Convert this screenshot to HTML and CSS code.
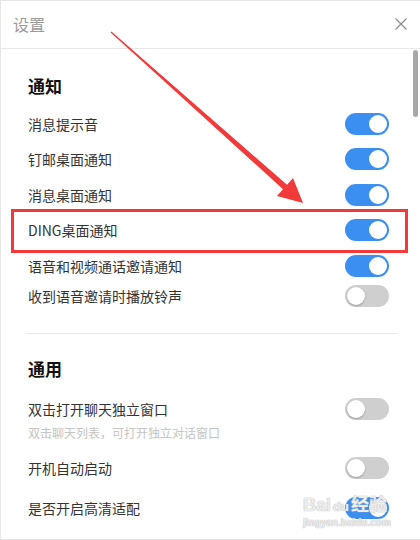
FILE: index.html
```html
<!DOCTYPE html>
<html lang="zh-CN">
  <head>
    <meta charset="UTF-8" />
    <meta name="viewport" content="width=device-width, initial-scale=1.0" />
    <title>设置</title>
    <link rel="stylesheet" href="styles.css">
  </head>
  <body>
    <div class="st-window">
      <div class="st-titlebar">
        <span class="st-title">设置</span>
        <svg class="st-close" width="12" height="12" viewBox="0 0 12 12">
          <path d="M0.5 0.5 L11.5 11.5 M11.5 0.5 L0.5 11.5" stroke="#8c8c8c" stroke-width="1.2" fill="none" />
        </svg>
      </div>

      <div class="st-body">
        <!-- 通知 -->
        <div class="st-section">
          <h2 class="st-heading">通知</h2>
          <div class="st-row">
            <span class="st-label">消息提示音</span>
            <span class="st-switch is-on"></span>
          </div>
          <div class="st-row">
            <span class="st-label">钉邮桌面通知</span>
            <span class="st-switch is-on"></span>
          </div>
          <div class="st-row">
            <span class="st-label">消息桌面通知</span>
            <span class="st-switch is-on"></span>
          </div>
          <div class="st-row">
            <span class="st-label">DING桌面通知</span>
            <span class="st-switch is-on"></span>
          </div>
          <div class="st-row">
            <span class="st-label">语音和视频通话邀请通知</span>
            <span class="st-switch is-on"></span>
          </div>
          <div class="st-row st-row-tight">
            <span class="st-label">收到语音邀请时播放铃声</span>
            <span class="st-switch"></span>
          </div>
        </div>

        <div class="st-divider"></div>

        <!-- 通用 -->
        <div class="st-section st-section-general">
          <h2 class="st-heading">通用</h2>
          <div class="st-row st-row-sub">
            <span class="st-label">双击打开聊天独立窗口</span>
            <span class="st-switch"></span>
          </div>
          <p class="st-hint">双击聊天列表，可打开独立对话窗口</p>
          <div class="st-row st-row-wide">
            <span class="st-label">开机自动启动</span>
            <span class="st-switch"></span>
          </div>
          <div class="st-row st-row-wide">
            <span class="st-label">是否开启高清适配</span>
            <span class="st-switch is-on"></span>
          </div>
        </div>
      </div>

      <!-- 滚动条 -->
      <div class="st-scroll-thumb"></div>

      <!-- 标注：红框和箭头 -->
      <div class="mark-box"></div>
      <svg class="mark-arrow" width="420" height="540" viewBox="0 0 420 540">
        <polygon points="111.4,31.5 287,184.8 293,178 303,203 277,196 283,189.2 110.6,32.5" fill="#f23a3a" />
      </svg>

      <!-- 水印 -->
      <div class="wm">
        <div class="wm-logo">Bai<span class="wm-paw">du</span>经验</div>
        <div class="wm-url">jingyan.baidu.com</div>
      </div>
    </div>
  </body>
</html>
```

FILE: styles.css
```css
* {
  box-sizing: border-box;
}
body {
  margin: 0;
  background: #fff;
  font-family: "Noto Sans CJK SC", "Noto Sans", sans-serif;
  color: #333;
}

.st-window {
  position: relative;
  width: 420px;
  height: 540px;
  border: 1px solid #e6e6e6;
  border-right: 0;
  background: #fff;
  overflow: hidden;
}

/* 标题栏 */
.st-titlebar {
  display: flex;
  align-items: center;
  justify-content: space-between;
  height: 48px;
  padding: 0 13px 1px 12px;
  border-bottom: 1px solid #e8e8e8;
}
.st-title {
  font-size: 16px;
  line-height: 20px;
  color: #999;
}
.st-close {
  display: block;
}

.st-body {
  padding: 0 31px 0 27px;
}

.st-heading {
  margin: 0;
  height: 24px;
  font-size: 17px;
  line-height: 24px;
  font-weight: bold;
  color: #111;
}
.st-section {
  padding-top: 25px;
}
.st-section .st-heading {
  margin-bottom: 8px;
}
.st-section-general {
  padding-top: 23px;
}
.st-section-general .st-heading {
  margin-bottom: 11px;
}

.st-row {
  display: flex;
  align-items: center;
  justify-content: space-between;
  height: 35.5px;
}
.st-row-tight {
  height: 25px;
}
.st-row-sub {
  height: 35px;
}
.st-row-wide {
  height: 39.5px;
}
.st-label {
  font-size: 14px;
  line-height: 20px;
  color: #333;
}

.st-hint {
  margin: -2px 0 8px;
  font-size: 12px;
  line-height: 16px;
  color: #c4c4c4;
}

.st-divider {
  height: 1px;
  margin: 24px -8px 0 -2px;
  background: #e8e8e8;
}

/* 开关 */
.st-switch {
  position: relative;
  flex: none;
  width: 44px;
  height: 22px;
  border-radius: 11px;
  background: #cfcfcf;
}
.st-switch::before {
  content: "";
  position: absolute;
  top: 2px;
  left: 2px;
  width: 18px;
  height: 18px;
  border-radius: 50%;
  background: #fff;
  box-shadow: 0 1px 2px rgba(0, 0, 0, 0.25);
}
.st-switch.is-on {
  background: #3a8ff0;
}
.st-switch.is-on::before {
  left: auto;
  right: 2px;
  box-shadow: none;
}

.st-scroll-thumb {
  position: absolute;
  top: 49px;
  right: 2px;
  width: 5px;
  height: 67px;
  border-radius: 3px;
  background: #a8a8a8;
}

/* 标注 */
.mark-box {
  position: absolute;
  left: 10px;
  top: 208px;
  width: 397px;
  height: 44px;
  border: 3px solid #f23a3a;
}
.mark-arrow {
  position: absolute;
  left: -1px;
  top: -1px;
}

/* 水印 */
.wm {
  position: absolute;
  left: 302px;
  top: 494px;
  color: rgba(255, 255, 255, 0.75);
  text-shadow: 0 0 1px #b8b8b8, 0 0 1px #b8b8b8;
  font-family: "Liberation Sans", "Noto Sans CJK SC", sans-serif;
}
.wm-logo {
  font-size: 18px;
  line-height: 20px;
  font-weight: bold;
}
.wm-paw {
  font-size: 13px;
  margin: 0 2px;
}
.wm-url {
  font-size: 10px;
  line-height: 12px;
  font-weight: bold;
}
```
